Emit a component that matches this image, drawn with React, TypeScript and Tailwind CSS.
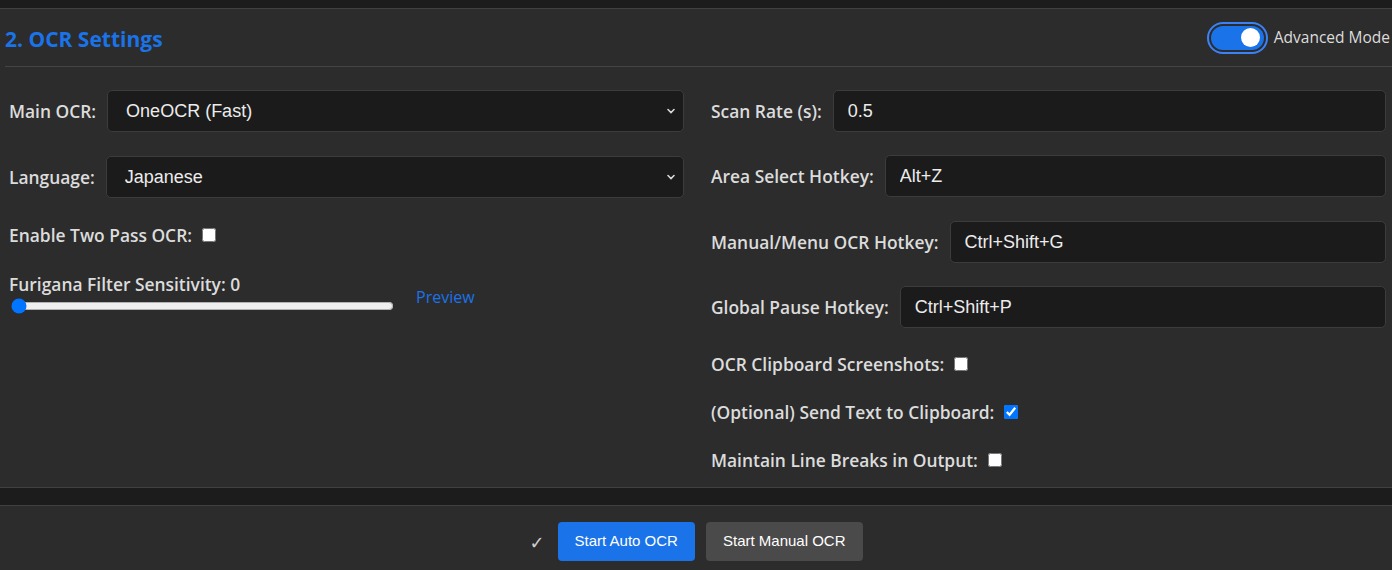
import { useState } from 'react';

const labelCls = "font-['Open_Sans',sans-serif] text-[17.4px] font-semibold text-[#dcdcdc] whitespace-nowrap";
const fieldCls =
  "h-[42px] flex-1 rounded-[5px] border border-[#3c3c3c] bg-[#1b1b1b] font-['Liberation_Sans',Arial,sans-serif] text-[18px] text-[#ececec] outline-none";

function SelectField({ label, value, options }: { label: string; value: string; options: string[] }) {
  return (
    <div className="flex items-center gap-[11px]">
      <span className={labelCls}>{label}</span>
      <div className="relative flex flex-1">
        <select defaultValue={value} className={`${fieldCls} appearance-none pl-[18px] pr-8`}>
          {options.map((o) => (
            <option key={o}>{o}</option>
          ))}
        </select>
        <svg
          className="pointer-events-none absolute right-[8px] top-1/2 -translate-y-1/2"
          width="10"
          height="10"
          viewBox="0 0 10 10"
        >
          <path d="M2 3.5 L5 6.5 L8 3.5" fill="none" stroke="#d8d8d8" strokeWidth="1.6" strokeLinecap="round" />
        </svg>
      </div>
    </div>
  );
}

function TextField({ label, value }: { label: string; value: string }) {
  return (
    <div className="flex items-center gap-[11px]">
      <span className={labelCls}>{label}</span>
      <input defaultValue={value} className={`${fieldCls} px-[14px]`} />
    </div>
  );
}

function CheckRow({ label, checked }: { label: string; checked?: boolean }) {
  return (
    <label className="flex h-[20px] items-center gap-[10px]">
      <span className={labelCls}>{label}</span>
      <input type="checkbox" defaultChecked={checked} className="h-[14px] w-[14px]" />
    </label>
  );
}

export default function App() {
  const [advanced, setAdvanced] = useState(true);

  return (
    <div className="flex h-[570px] w-[1392px] flex-col overflow-hidden bg-[#1c1c1c]">
      <div className="h-[9px] border-b border-[#404040]" />

      <section className="border-b border-[#404040] bg-[#2c2c2c]">
        <div className="ml-[5px] flex h-[58px] items-center justify-between border-b border-[#444] pr-[2px]">
          <h2 className="mt-[5px] font-['Open_Sans',sans-serif] text-[21px] font-bold text-[#1a73e8]">2. OCR Settings</h2>
          <div className="flex items-center gap-[6px]">
            <button
              type="button"
              onClick={() => setAdvanced(!advanced)}
              className="rounded-full border-2 border-[#3b82f6] p-[2px]"
            >
              <div
                className={
                  advanced
                    ? 'flex h-[24px] w-[53px] items-center justify-end rounded-full bg-[#1a73e8] px-[4px]'
                    : 'flex h-[24px] w-[53px] items-center justify-start rounded-full bg-[#555] px-[4px]'
                }
              >
                <div className="h-[19px] w-[19px] rounded-full bg-white" />
              </div>
            </button>
            <span className="font-['Open_Sans',sans-serif] text-[15.5px] text-[#dcdcdc]">Advanced Mode</span>
          </div>
        </div>

        <div className="grid h-[420px] grid-cols-2 gap-x-[27px] pl-[9px] pr-[6px] pt-[23px]">
          <div className="flex flex-col">
            <SelectField label="Main OCR:" value="OneOCR (Fast)" options={['OneOCR (Fast)', 'Google Lens', 'Manga OCR']} />
            <div className="mt-[24px]">
              <SelectField label="Language:" value="Japanese" options={['Japanese', 'English', 'Chinese']} />
            </div>
            <div className="mt-[27px]">
              <CheckRow label="Enable Two Pass OCR:" />
            </div>
            <div className="mt-[26px] flex items-end gap-[22px]">
              <div className="flex flex-col">
                <span className={labelCls}>Furigana Filter Sensitivity: 0</span>
                <input type="range" min={0} max={100} defaultValue={0} className="ml-[2px] mt-[1px] w-[383px]" />
              </div>
              <a className="mb-[5px] font-['Open_Sans',sans-serif] text-[16px] text-[#1a73e8]">Preview</a>
            </div>
          </div>

          <div className="flex flex-col">
            <TextField label="Scan Rate (s):" value="0.5" />
            <div className="mt-[23px]">
              <TextField label="Area Select Hotkey:" value="Alt+Z" />
            </div>
            <div className="mt-[24px]">
              <TextField label="Manual/Menu OCR Hotkey:" value="Ctrl+Shift+G" />
            </div>
            <div className="mt-[23px]">
              <TextField label="Global Pause Hotkey:" value="Ctrl+Shift+P" />
            </div>
            <div className="mt-[26px] flex flex-col gap-[28px]">
              <CheckRow label="OCR Clipboard Screenshots:" />
              <CheckRow label="(Optional) Send Text to Clipboard:" checked />
              <CheckRow label="Maintain Line Breaks in Output:" />
            </div>
          </div>
        </div>
      </section>

      <div className="h-[17px] bg-[#1c1c1c]" />

      <footer className="flex flex-1 items-start justify-center gap-[11px] border-t border-[#404040] bg-[#2c2c2c] pt-[16px]">
        <span className="mr-[2px] mt-[7px] font-['DejaVu_Sans',sans-serif] text-[18px] text-[#cfcfcf]">✓</span>
        <button
          type="button"
          className="h-[39px] rounded-[4px] bg-[#1a73e8] px-[17px] font-['Liberation_Sans',Arial,sans-serif] text-[15px] text-white"
        >
          Start Auto OCR
        </button>
        <button
          type="button"
          className="h-[39px] rounded-[4px] bg-[#4a4a4a] px-[17px] font-['Liberation_Sans',Arial,sans-serif] text-[15px] text-white"
        >
          Start Manual OCR
        </button>
      </footer>
    </div>
  );
}
